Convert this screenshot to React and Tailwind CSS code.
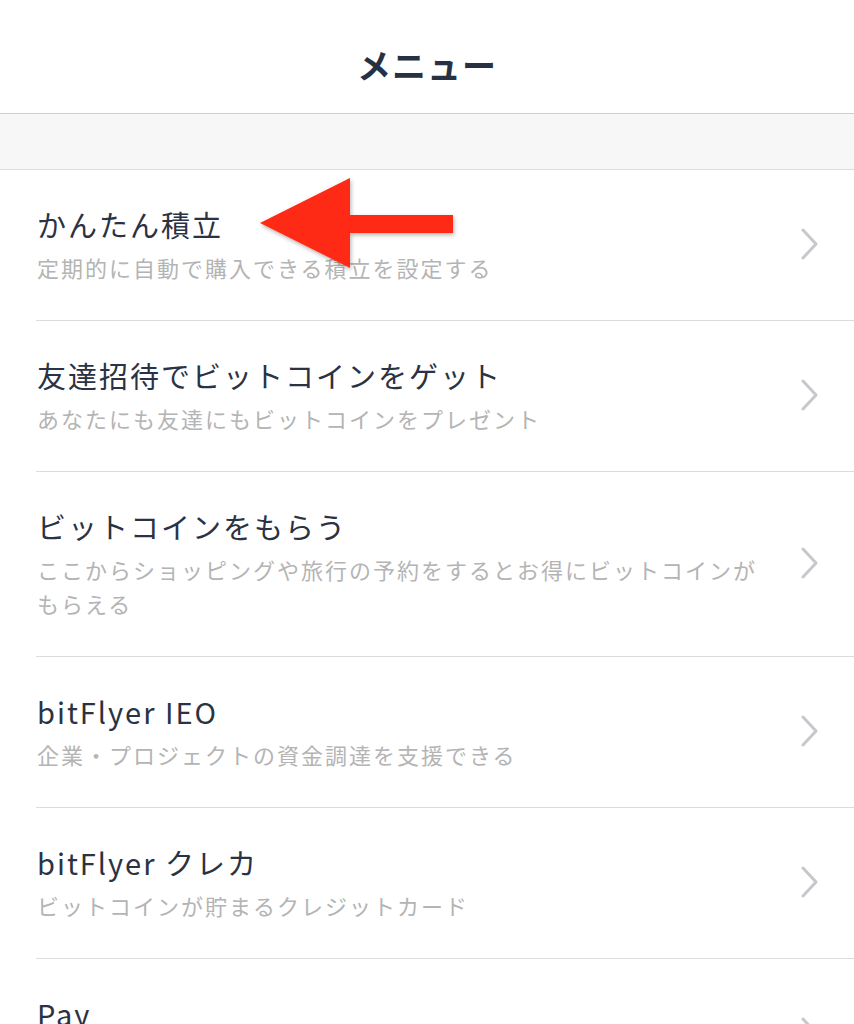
const items = [
  { title: 'かんたん積立', sub: '定期的に自動で購入できる積立を設定する' },
  { title: '友達招待でビットコインをゲット', sub: 'あなたにも友達にもビットコインをプレゼント' },
  { title: 'ビットコインをもらう', sub: 'ここからショッピングや旅行の予約をするとお得にビットコインがもらえる' },
  { title: 'bitFlyer IEO', sub: '企業・プロジェクトの資金調達を支援できる' },
  { title: 'bitFlyer クレカ', sub: 'ビットコインが貯まるクレジットカード' },
  { title: 'Pay', sub: 'ビットコインで支払いができる' },
]

const Chevron = () => (
  <svg width="17" height="32" viewBox="0 0 17 32" fill="none" className="shrink-0">
    <path d="M2 2 L15 16 L2 30" stroke="#c7c7cc" strokeWidth="3" strokeLinecap="round" strokeLinejoin="round" />
  </svg>
)

const MenuRow = ({ item }) => (
  <div className="pl-[36px]">
    <div className="flex items-center border-b border-[#dcdcdc] pr-[36px] pt-[34px] pb-[36px]">
      <div className="flex-1 min-w-0 pl-[1px] pr-[40px]">
        <div className="text-[29px] leading-[40px] tracking-[2px] text-[#2a3243]">{item.title}</div>
        <div className="mt-[6px] text-[22px] leading-[34px] tracking-[2px] text-[#b4b4b4]">{item.sub}</div>
      </div>
      <Chevron />
    </div>
  </div>
)

export default function App() {
  return (
    <div
      className="relative w-[854px] h-[1024px] overflow-hidden bg-white"
      style={{ fontFamily: '"Noto Sans CJK JP", "Noto Sans", sans-serif' }}
    >
      {/* Header */}
      <div className="h-[114px] flex items-center justify-center border-b border-[#cfcfcf]">
        <h1 className="text-[34px] font-bold text-[#283142] tracking-[1px] mt-[16px]">メニュー</h1>
      </div>
      <div className="h-[56px] bg-[#f7f7f7] border-b border-[#dcdcdc]" />

      {/* Menu list */}
      <div>
        {items.map((item) => (
          <MenuRow key={item.title} item={item} />
        ))}
      </div>

      {/* Red annotation arrow */}
      <svg className="absolute left-[250px] top-[172px]" width="220" height="105" viewBox="0 0 220 105">
        <defs>
          <filter id="sh" x="-10%" y="-10%" width="130%" height="130%">
            <feDropShadow dx="1" dy="2" stdDeviation="2" floodColor="#000" floodOpacity="0.3" />
          </filter>
        </defs>
        <path d="M10 51 L100 6 L100 43 L203 43 L203 61 L100 61 L100 96 Z" fill="#ff2a12" filter="url(#sh)" />
      </svg>
    </div>
  )
}
